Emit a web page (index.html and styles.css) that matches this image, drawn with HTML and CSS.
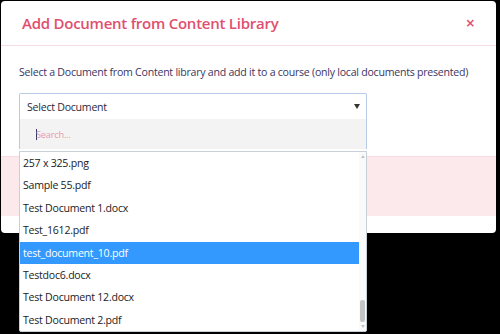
FILE: index.html
```html
<!DOCTYPE html>
<html lang="en">
<head>
    <meta charset="UTF-8">
    <meta name="viewport" content="width=device-width, initial-scale=1.0">
    <title>Add Document from Content Library</title>
    <link rel="stylesheet" href="styles.css">
</head>
<body>
    <div class="modal">
        <div class="modal-header">
            <h2>Add Document from Content Library</h2>
            <span class="close">&times;</span>
        </div>

        <div class="modal-body">
            <p>Select a Document from Content library and add it to a course (only local documents presented)</p>

            <div class="picker">
                <div class="picker-toggle">
                    <span>Select Document</span>
                    <span class="arrow"></span>
                </div>

                <div class="picker-drop">
                    <div class="picker-search">
                        <span class="caret"></span>
                        <input type="text" placeholder="Search...">
                    </div>
                    <div class="picker-list">
                        <ul>
                            <li>257 x 325.png</li>
                            <li>Sample 55.pdf</li>
                            <li>Test Document 1.docx</li>
                            <li>Test_1612.pdf</li>
                            <li class="active">test_document_10.pdf</li>
                            <li>Testdoc6.docx</li>
                            <li>Test Document 12.docx</li>
                            <li>Test Document 2.pdf</li>
                        </ul>
                        <div class="scrollbar">
                            <span class="sb-up"></span>
                            <span class="sb-thumb"></span>
                            <span class="sb-down"></span>
                        </div>
                    </div>
                </div>
            </div>
        </div>

        <div class="modal-footer"></div>
    </div>
</body>
</html>
```

FILE: styles.css
```css
body {
    margin: 0;
    padding: 1px 4px 0 1px;
    background-color: #000;
    font-family: "Open Sans", Arial, sans-serif;
    height: 333px;
    overflow: hidden;
}

.modal {
    background-color: white;
    border-radius: 4px;
    height: 232px;
}

.modal-header {
    display: flex;
    align-items: center;
    justify-content: space-between;
    height: 44px;
    padding: 0 21px 0 21px;
    border-bottom: 1px solid #f6dce2;
}

.modal-header h2 {
    margin: 0;
    font-size: 15px;
    font-weight: 600;
    letter-spacing: -0.25px;
    color: #e0506e;
}

.close {
    color: #e0506e;
    font-size: 16px;
    font-weight: 600;
    line-height: 1;
}

.modal-body {
    box-sizing: border-box;
    height: 110px;
    padding: 18px 18px 0;
}

.modal-body p {
    margin: 0 0 13px;
    font-size: 10.6px;
    letter-spacing: -0.25px;
    line-height: 16px;
    color: #3b3562;
    white-space: nowrap;
}

.picker {
    position: relative;
    width: 348px;
}

.picker-toggle {
    display: flex;
    align-items: center;
    justify-content: space-between;
    height: 25px;
    padding: 0 6px 0 7px;
    border: 1px solid #b8cbe6;
    border-bottom: none;
    border-radius: 2px 2px 0 0;
    font-size: 10.6px;
    letter-spacing: -0.25px;
    color: #2b2a3a;
}

.arrow {
    width: 0;
    height: 0;
    border-left: 3.5px solid transparent;
    border-right: 3.5px solid transparent;
    border-top: 5px solid #333;
}

.picker-drop {
    position: absolute;
    top: 26px;
    left: 0;
    right: 0;
    z-index: 10;
}

.picker-search {
    height: 30px;
    background-color: #f3f3f3;
    border-left: 1px solid #b8cbe6;
    border-right: 1px solid #b8cbe6;
    display: flex;
    align-items: center;
    padding-left: 16px;
}

.caret {
    width: 1px;
    height: 11px;
    margin-right: -1px;
    background-color: #3b3562;
}

.picker-search input {
    border: none;
    background: transparent;
    font-family: inherit;
    font-size: 9.2px;
    letter-spacing: -0.2px;
    color: #333;
    outline: none;
    padding: 0;
}

.picker-search input::placeholder {
    color: #e79aab;
}

.picker-list {
    display: flex;
    margin-top: 2px;
    height: 179px;
    background-color: white;
    border: 1px solid #c7cfd9;
    border-radius: 0 0 2px 2px;
}

.picker-list ul {
    flex: 1;
    list-style: none;
    margin: 0;
    padding: 0;
}

.picker-list li {
    height: 22.4px;
    line-height: 22.4px;
    padding-left: 3px;
    font-size: 10.6px;
    letter-spacing: -0.25px;
    color: #222;
}

.picker-list li.active {
    background-color: #3399ff;
    color: white;
}

.scrollbar {
    width: 7px;
    display: flex;
    flex-direction: column;
    align-items: center;
    background-color: #fafafa;
}

.sb-up,
.sb-down {
    width: 0;
    height: 0;
    border-left: 2.5px solid transparent;
    border-right: 2.5px solid transparent;
    margin: 3px 0;
}

.sb-up {
    border-bottom: 3px solid #c4c4c4;
}

.sb-down {
    border-top: 3px solid #c4c4c4;
}

.sb-thumb {
    margin-top: auto;
    width: 5px;
    height: 22px;
    border-radius: 2px;
    background-color: #c4c4c4;
}

.modal-footer {
    height: 59px;
    background-color: #fbe9ec;
    border-top: 1px solid #f6dce2;
}
```
